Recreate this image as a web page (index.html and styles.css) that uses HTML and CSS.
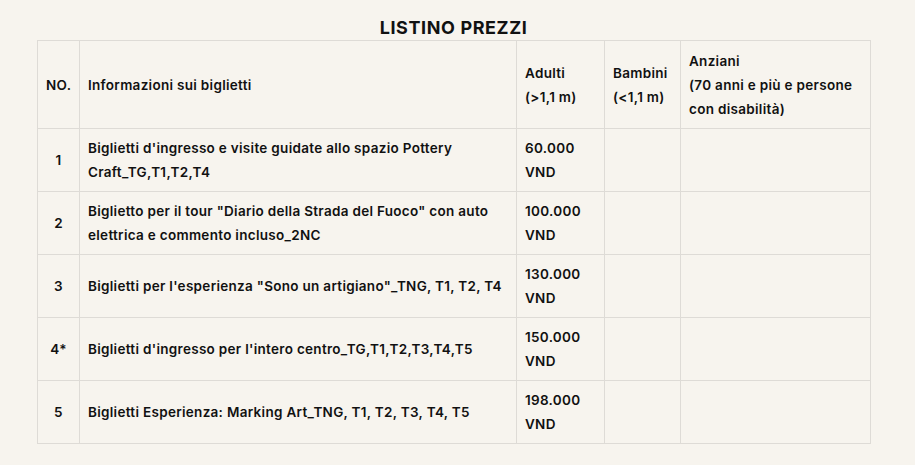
FILE: index.html
```html
<!DOCTYPE html>
<html lang="it">
<head>
<meta charset="utf-8">
<link rel="stylesheet" href="styles.css">
</head>
<body>
<div class="wrap">
  <h2 class="title">LISTINO PREZZI</h2>
  <table class="prices">
    <colgroup>
      <col class="c-no"><col class="c-info"><col class="c-ad"><col class="c-ch"><col class="c-old">
    </colgroup>
    <thead>
      <tr>
        <th class="num">NO.</th>
        <th>Informazioni sui biglietti</th>
        <th>Adulti<br>(&gt;1,1 m)</th>
        <th>Bambini<br>(&lt;1,1 m)</th>
        <th>Anziani<br>(70 anni e più e persone con disabilità)</th>
      </tr>
    </thead>
    <tbody>
      <tr><td class="num">1</td><td>Biglietti d'ingresso e visite guidate allo spazio Pottery Craft_TG,T1,T2,T4</td><td>60.000 VND</td><td></td><td></td></tr>
      <tr><td class="num">2</td><td>Biglietto per il tour "Diario della Strada del Fuoco" con auto elettrica e commento incluso_2NC</td><td>100.000 VND</td><td></td><td></td></tr>
      <tr><td class="num">3</td><td>Biglietti per l'esperienza "Sono un artigiano"_TNG, T1, T2, T4</td><td>130.000 VND</td><td></td><td></td></tr>
      <tr><td class="num">4*</td><td>Biglietti d'ingresso per l'intero centro_TG,T1,T2,T3,T4,T5</td><td>150.000 VND</td><td></td><td></td></tr>
      <tr><td class="num">5</td><td>Biglietti Esperienza: Marking Art_TNG, T1, T2, T3, T4, T5</td><td>198.000 VND</td><td></td><td></td></tr>
    </tbody>
  </table>
</div>
</body>
</html>
```
FILE: styles.css
```css
html, body {
  margin: 0;
  background: #f7f4ee;
}
body {
  font-family: Inter, "Open Sans", sans-serif;
  color: #111;
}
.wrap {
  width: 833px;
  margin-left: 37px;
}
.title {
  margin: 0;
  padding-top: 16px;
  height: 24px;
  line-height: 24px;
  font-size: 18px;
  font-weight: 700;
  letter-spacing: 0.6px;
  text-align: center;
}
.prices {
  border-collapse: collapse;
  width: 833px;
  table-layout: fixed;
  font-size: 13.5px;
  font-weight: 600;
  letter-spacing: 0.3px;
  line-height: 24px;
}
.c-no { width: 42px; }
.c-info { width: 437px; }
.c-ad { width: 88px; }
.c-ch { width: 76px; }
.c-old { width: 190px; }
.prices th, .prices td {
  border: 1px solid #dedbd6;
  padding: 7px 8px;
  text-align: left;
  vertical-align: middle;
  font-weight: 600;
}
.prices thead th { height: 73px; }
.prices tbody td { height: 48px; }
.prices .num { text-align: center; }
```
